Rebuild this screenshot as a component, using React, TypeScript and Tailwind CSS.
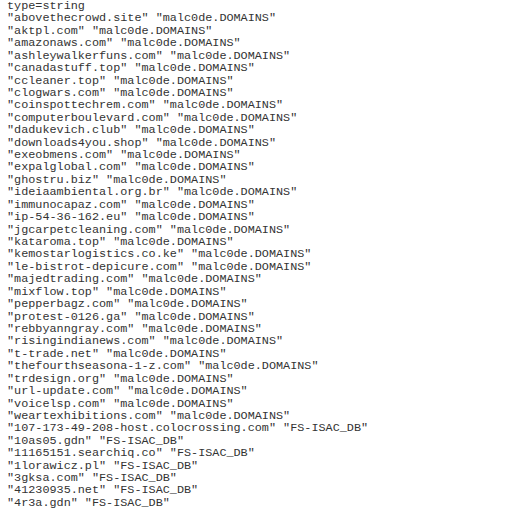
const LINES = [
  "type=string",
  '"abovethecrowd.site" "malc0de.DOMAINS"',
  '"aktpl.com" "malc0de.DOMAINS"',
  '"amazonaws.com" "malc0de.DOMAINS"',
  '"ashleywalkerfuns.com" "malc0de.DOMAINS"',
  '"canadastuff.top" "malc0de.DOMAINS"',
  '"ccleaner.top" "malc0de.DOMAINS"',
  '"clogwars.com" "malc0de.DOMAINS"',
  '"coinspottechrem.com" "malc0de.DOMAINS"',
  '"computerboulevard.com" "malc0de.DOMAINS"',
  '"dadukevich.club" "malc0de.DOMAINS"',
  '"downloads4you.shop" "malc0de.DOMAINS"',
  '"exeobmens.com" "malc0de.DOMAINS"',
  '"expalglobal.com" "malc0de.DOMAINS"',
  '"ghostru.biz" "malc0de.DOMAINS"',
  '"ideiaambiental.org.br" "malc0de.DOMAINS"',
  '"immunocapaz.com" "malc0de.DOMAINS"',
  '"ip-54-36-162.eu" "malc0de.DOMAINS"',
  '"jgcarpetcleaning.com" "malc0de.DOMAINS"',
  '"kataroma.top" "malc0de.DOMAINS"',
  '"kemostarlogistics.co.ke" "malc0de.DOMAINS"',
  '"le-bistrot-depicure.com" "malc0de.DOMAINS"',
  '"majedtrading.com" "malc0de.DOMAINS"',
  '"mixflow.top" "malc0de.DOMAINS"',
  '"pepperbagz.com" "malc0de.DOMAINS"',
  '"protest-0126.ga" "malc0de.DOMAINS"',
  '"rebbyanngray.com" "malc0de.DOMAINS"',
  '"risingindianews.com" "malc0de.DOMAINS"',
  '"t-trade.net" "malc0de.DOMAINS"',
  '"thefourthseasona-1-z.com" "malc0de.DOMAINS"',
  '"trdesign.org" "malc0de.DOMAINS"',
  '"url-update.com" "malc0de.DOMAINS"',
  '"voicelsp.com" "malc0de.DOMAINS"',
  '"weartexhibitions.com" "malc0de.DOMAINS"',
  '"107-173-49-208-host.colocrossing.com" "FS-ISAC_DB"',
  '"10as05.gdn" "FS-ISAC_DB"',
  '"11165151.searchiq.co" "FS-ISAC_DB"',
  '"1lorawicz.pl" "FS-ISAC_DB"',
  '"3gksa.com" "FS-ISAC_DB"',
  '"41230935.net" "FS-ISAC_DB"',
  '"4r3a.gdn" "FS-ISAC_DB"',
];

export default function App() {
  return (
    <div className="w-[511px] h-[512px] bg-white overflow-hidden pl-[7px] font-['Liberation_Mono',monospace] text-[11.8px] leading-[12.42px] text-[#333]">
      {LINES.map((line, i) => (
        <div key={i} className="whitespace-pre">
          {line}
        </div>
      ))}
    </div>
  );
}
